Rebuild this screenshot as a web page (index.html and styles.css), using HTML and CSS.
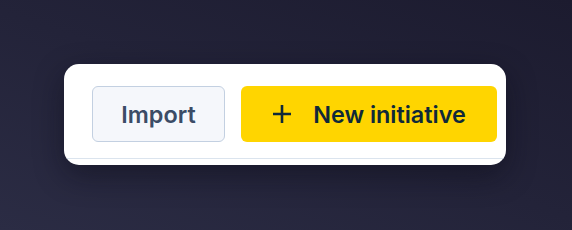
FILE: index.html
```html
<!DOCTYPE html>
<html lang="en">
<head>
    <meta charset="UTF-8">
    <meta name="viewport" content="width=device-width, initial-scale=1.0">
    <title>Initiatives toolbar</title>
    <link rel="stylesheet" href="styles.css">
</head>
<body>
    <div class="card">
        <div class="toolbar">
            <button class="btn btn-secondary">Import</button>
            <button class="btn btn-primary">
                <svg class="icon" width="20" height="20" viewBox="0 0 20 20" fill="none" stroke="currentColor" stroke-width="2.6">
                    <path d="M10 1v18M1 10h18"/>
                </svg>
                New initiative
            </button>
        </div>
    </div>
</body>
</html>
```

FILE: styles.css
```css
* {
    margin: 0;
    padding: 0;
    box-sizing: border-box;
}

body {
    width: 572px;
    height: 230px;
    overflow: hidden;
    padding: 64px 0 0 64px;
    background: linear-gradient(20deg, #2b2c44 0%, #232339 50%, #1c1b2f 100%);
    font-family: 'Inter', 'Liberation Sans', sans-serif;
}

.card {
    width: 442px;
    height: 101px;
    background: #ffffff;
    border-radius: 15px;
    box-shadow: 0 10px 30px rgba(8, 8, 20, 0.45);
    overflow: hidden;
}

.toolbar {
    display: flex;
    gap: 16px;
    padding: 22px 9px 16px 28px;
    border-bottom: 1px solid #dbe4ee;
}

.btn {
    height: 56px;
    display: flex;
    align-items: center;
    justify-content: center;
    border-radius: 6px;
    font-family: inherit;
    font-size: 23.4px;
    font-weight: 600;
    cursor: pointer;
}

.btn-secondary {
    width: 133px;
    background: #f5f7fb;
    border: 1px solid #c3d0e1;
    color: #3b4c66;
}

.btn-primary {
    width: 256px;
    gap: 21px;
    background: #ffd500;
    border: none;
    color: #0f2939;
}

.icon {
    flex-shrink: 0;
}
```
